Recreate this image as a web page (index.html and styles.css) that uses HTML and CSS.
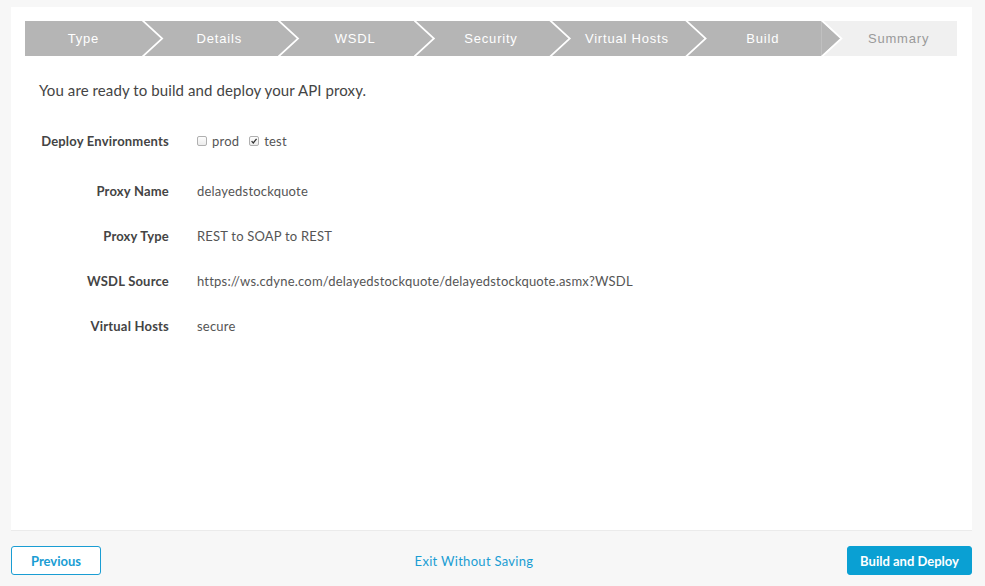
FILE: index.html
```html
<!DOCTYPE html>
<html>
<head>
<meta charset="utf-8">
<link rel="stylesheet" href="styles.css">
</head>
<body>
<div class="panel">
  <ol class="steps">
    <li class="step">Type</li>
    <li class="step">Details</li>
    <li class="step">WSDL</li>
    <li class="step">Security</li>
    <li class="step">Virtual Hosts</li>
    <li class="step">Build</li>
    <li class="step step-current">Summary</li>
  </ol>
  <p class="intro">You are ready to build and deploy your API proxy.</p>
  <div class="summary">
    <div class="label first">Deploy Environments</div>
    <div class="value first envs">
      <label class="env"><span class="cb"></span>prod</label>
      <label class="env"><span class="cb checked"><svg viewBox="0 0 10 10" width="8" height="8"><path d="M2 5.2 L4.1 7.4 L8.2 2.4" fill="none" stroke="#333" stroke-width="1.6"/></svg></span>test</label>
    </div>
    <div class="label">Proxy Name</div>
    <div class="value">delayedstockquote</div>
    <div class="label">Proxy Type</div>
    <div class="value">REST to SOAP to REST</div>
    <div class="label">WSDL Source</div>
    <div class="value">https://ws.cdyne.com/delayedstockquote/delayedstockquote.asmx?WSDL</div>
    <div class="label">Virtual Hosts</div>
    <div class="value">secure</div>
  </div>
</div>
<div class="footer">
  <button class="btn btn-outline">Previous</button>
  <a class="exit">Exit Without Saving</a>
  <button class="btn btn-primary">Build and Deploy</button>
</div>
</body>
</html>
```

FILE: styles.css
```css
html, body {
  margin: 0;
  padding: 0;
}
body {
  background: #f7f7f7;
  padding: 7px 13px 0 11px;
  font-family: Lato, "Open Sans", sans-serif;
  color: #444;
}
.panel {
  background: #fff;
  height: 524px;
  box-sizing: border-box;
  padding: 14px 15px 0 14px;
  border-bottom: 1px solid #ebebeb;
}
.steps {
  list-style: none;
  margin: 0;
  padding: 0;
  display: flex;
  height: 35px;
  background: #b5b5b5;
  font-family: "Liberation Sans", Arial, sans-serif;
  font-size: 13px;
  letter-spacing: 0.8px;
}
.step {
  flex: 1 1 0;
  position: relative;
  text-align: center;
  line-height: 35px;
  color: #fff;
  white-space: nowrap;
}
.step + .step {
  padding-left: 19px;
}
.step + .step::before {
  content: "";
  position: absolute;
  left: 0;
  top: 0;
  width: 19px;
  height: 35px;
  background: #b5b5b5;
  clip-path: polygon(0 0, 19px 17.5px, 0 35px);
}
.step + .step::after {
  content: "";
  position: absolute;
  left: 0;
  top: 0;
  width: 22px;
  height: 35px;
  background: #fff;
  clip-path: polygon(0 0, 2.6px 0, 21.6px 17.5px, 2.6px 35px, 0 35px, 19px 17.5px);
}
.step-current {
  background: #f0f0f0;
  color: #9a9a9a;
}
.intro {
  margin: 24px 0 0 14px;
  font-size: 15px;
  line-height: 20px;
  letter-spacing: 0.1px;
  color: #444;
}
.summary {
  display: grid;
  grid-template-columns: 130px 1fr;
  column-gap: 28px;
  row-gap: 25px;
  margin: 31px 0 0 14px;
  font-size: 13px;
  line-height: 20px;
  letter-spacing: 0.2px;
}
.label {
  text-align: right;
  font-weight: bold;
  color: #444;
}
.label.first, .value.first {
  margin-bottom: 5px;
}
.value {
  color: #555;
}
.envs {
  display: flex;
  gap: 10px;
}
.env {
  display: flex;
  align-items: center;
  gap: 5px;
}
.cb {
  width: 8px;
  height: 8px;
  border: 1px solid #b0b0b0;
  border-radius: 2px;
  background: linear-gradient(#fdfdfd, #ececec);
  display: inline-flex;
  align-items: center;
  justify-content: center;
}
.cb svg {
  display: block;
}
.footer {
  display: flex;
  justify-content: space-between;
  align-items: center;
  margin-top: 15px;
}
.btn {
  font-family: Lato, "Open Sans", sans-serif;
  font-size: 13px;
  font-weight: bold;
  height: 29px;
  border-radius: 3px;
  padding: 0;
  cursor: pointer;
}
.btn-outline {
  width: 90px;
  background: #fff;
  color: #1a9dd3;
  border: 1px solid #1a9dd3;
}
.btn-primary {
  width: 125px;
  background: #0aa0d3;
  color: #fff;
  border: 1px solid #0aa0d3;
}
.exit {
  font-size: 13px;
  color: #1a9dd3;
  letter-spacing: 0.3px;
}
```
